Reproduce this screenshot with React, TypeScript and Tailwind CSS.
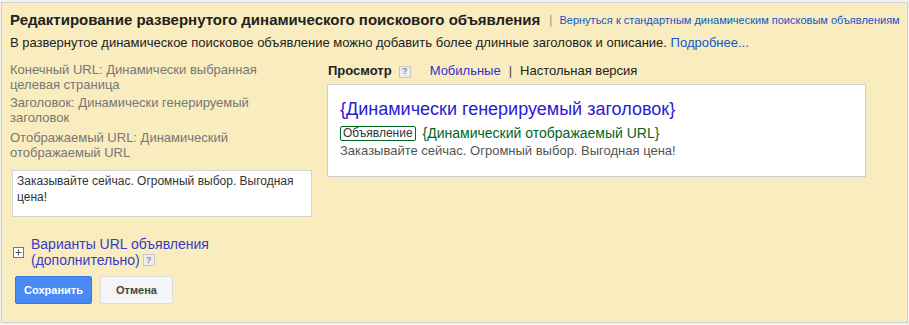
import React from "react";

const HelpIcon = () => (
  <span className="inline-flex h-[12px] w-[12px] items-center justify-center border border-[#c9c9c9] bg-[#ececec] text-[9px] leading-none font-bold text-[#8a8a8a] align-middle">
    ?
  </span>
);

const PlusBox = () => (
  <span className="inline-flex h-[11px] w-[11px] items-center justify-center border border-[#777] bg-white">
    <svg width="7" height="7" viewBox="0 0 7 7">
      <path d="M3.5 0.5v6M0.5 3.5h6" stroke="#555" strokeWidth="1" />
    </svg>
  </span>
);

export default function App() {
  return (
    <div
      className="h-[325px] w-[909px] bg-[#f1f1f1] pt-[2px] pl-[1px]"
      style={{ fontFamily: '"Liberation Sans", Arial, sans-serif' }}
    >
      <div className="h-[321px] w-[907px] border border-[#cfcfcf] bg-[#f9ecbf] pl-[8px] pt-[7px]">
        {/* header */}
        <div className="flex items-center text-[15px] leading-[20px]">
          <span className="font-bold text-[#222]">
            Редактирование развернутого динамического поискового объявления
          </span>
          <span className="ml-[9px] mr-[7px] text-[12px] text-[#999]">|</span>
          <a className="whitespace-nowrap text-[11px] text-[#1155cc]">
            Вернуться к стандартным динамическим поисковым объявлениям
          </a>
        </div>
        <div className="mt-[4px] text-[13px] leading-[18px] text-[#222]">
          В развернутое динамическое поисковое объявление можно добавить более длинные заголовок и описание.{" "}
          <a className="text-[#1155cc]">Подробнее...</a>
        </div>

        <div className="mt-[10px] flex">
          {/* left column */}
          <div className="w-[317px]">
            <div className="w-[280px] text-[13px] leading-[15px] text-[#777]">
              <div>Конечный URL: Динамически выбранная целевая страница</div>
              <div className="mt-[3px]">Заголовок: Динамически генерируемый заголовок</div>
              <div className="mt-[5px]">Отображаемый URL: Динамический отображаемый URL</div>
            </div>
            <div className="ml-[2px] mt-[10px] h-[47px] w-[300px] border border-[#d4d4d4] bg-white px-[4px] py-[2px] text-[12px] leading-[16px] text-[#333]">
              Заказывайте сейчас. Огромный выбор. Выгодная цена!
            </div>
            <div className="mt-[19px] flex items-start">
              <span className="ml-[3px] mt-[3px] mr-[7px]">
                <PlusBox />
              </span>
              <div className="text-[14px] leading-[16px] text-[#3a3ac8]">
                <div>Варианты URL объявления</div>
                <div className="flex items-center gap-[3px]">
                  (дополнительно) <HelpIcon />
                </div>
              </div>
            </div>
            <div className="mt-[8px] ml-[5px] flex gap-[8px]">
              <button className="h-[28px] w-[77px] rounded-[2px] border border-[#3079ed] bg-[#4a8af4] text-[11px] font-bold text-white">
                Сохранить
              </button>
              <button className="h-[28px] w-[73px] rounded-[2px] border border-[#dcdcdc] bg-[#f5f5f5] text-[11px] font-bold text-[#444]">
                Отмена
              </button>
            </div>
          </div>

          {/* right column */}
          <div className="pt-[1px]">
            <div className="flex items-center pl-[1px] text-[13px] leading-[16px]">
              <span className="font-bold text-[#222]">Просмотр</span>
              <span className="ml-[7px]">
                <HelpIcon />
              </span>
              <a className="ml-[19px] text-[#3333cc]">Мобильные</a>
              <span className="mx-[8px] text-[#444]">|</span>
              <span className="text-[#222]">Настольная версия</span>
            </div>
            <div className="mt-[5px] h-[93px] w-[539px] border border-[#cfcfcf] bg-white pl-[12px] pt-[13px]">
              <div className="text-[18px] leading-[22px] text-[#2a1ad0]">
                {"{Динамически генерируемый заголовок}"}
              </div>
              <div className="mt-[5px] flex items-center text-[14px] leading-[17px] text-[#006621]">
                <span className="mr-[7px] rounded-[2px] border border-[#006621] px-[2px] text-[12px] leading-[13px] text-[#333]">
                  Объявление
                </span>
                {"{Динамический отображаемый URL}"}
              </div>
              <div className="mt-[1px] text-[13px] leading-[16px] text-[#545454]">
                Заказывайте сейчас. Огромный выбор. Выгодная цена!
              </div>
            </div>
          </div>
        </div>
      </div>
    </div>
  );
}
